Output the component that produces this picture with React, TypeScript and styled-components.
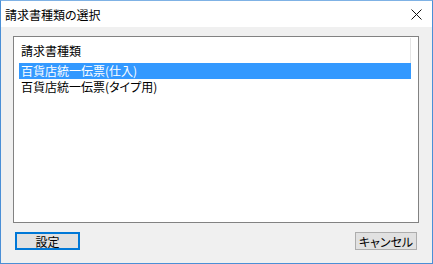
import styled, { createGlobalStyle } from "styled-components";

const GlobalStyle = createGlobalStyle`
  html, body {
    margin: 0;
    padding: 0;
    background: #ffffff;
  }
`;

const FONT = `"Noto Sans CJK JP", "Noto Sans", sans-serif`;

const rows = ["百貨店統一伝票(仕入)", "百貨店統一伝票(タイプ用)"];

export default function App() {
  return (
    <>
      <GlobalStyle />
      <Window>
        <TitleBar>
          <Title>請求書種類の選択</Title>
          <CloseButton>
            <svg width="11" height="11" viewBox="0 0 11 11">
              <path d="M0.5 0.5 L10.5 10.5 M10.5 0.5 L0.5 10.5" stroke="#111" strokeWidth="1" />
            </svg>
          </CloseButton>
        </TitleBar>
        <Client>
          <ListBox>
            <Column>
              <Header>請求書種類</Header>
              {rows.map((row, i) => (
                <Row key={row} selected={i === 0}>
                  {row}
                </Row>
              ))}
            </Column>
          </ListBox>
          <Buttons>
            <Button isDefault>設定</Button>
            <Button>キャンセル</Button>
          </Buttons>
        </Client>
      </Window>
    </>
  );
}

const Window = styled.div`
  width: 433px;
  height: 264px;
  box-sizing: border-box;
  border: 1px solid #4a8fd6;
  border-top-color: #7fb2e5;
  display: flex;
  flex-direction: column;
  font-family: ${FONT};
  font-feature-settings: "palt";
  background: #f0f0f0;
`;

const TitleBar = styled.div`
  height: 26px;
  flex-shrink: 0;
  background: #ffffff;
  display: flex;
  align-items: center;
  justify-content: space-between;
  padding: 0 10px 0 4px;
`;

const Title = styled.div`
  font-size: 12px;
  color: #000;
  line-height: 14px;
  padding-top: 1px;
`;

const CloseButton = styled.div`
  width: 11px;
  height: 11px;
  display: flex;
`;

const Client = styled.div`
  flex: 1;
  display: flex;
  flex-direction: column;
  padding: 9px 13px 13px 12px;
  gap: 9px;
`;

const ListBox = styled.div`
  height: 187px;
  box-sizing: border-box;
  border: 1px solid #828282;
  background: #ffffff;
  padding: 1px 6px 0 5px;
`;

const Column = styled.div`
  width: 392px;
  display: flex;
  flex-direction: column;
`;

const Header = styled.div`
  height: 25px;
  box-sizing: border-box;
  border-right: 1px solid #e5e5e5;
  font-size: 12px;
  line-height: 25px;
  padding-left: 2px;
  color: #000;
`;

const Row = styled.div<{ selected?: boolean }>`
  height: 16px;
  line-height: 16px;
  font-size: 12px;
  padding-left: 2px;
  white-space: nowrap;
  color: ${(p) => (p.selected ? "#ffffff" : "#000000")};
  background: ${(p) => (p.selected ? "#3399ff" : "transparent")};
`;

const Buttons = styled.div`
  display: flex;
  justify-content: space-between;
  padding: 0 2px 0 2px;
`;

const Button = styled.div<{ isDefault?: boolean }>`
  height: 18px;
  width: ${(p) => (p.isDefault ? "65px" : "62px")};
  box-sizing: border-box;
  background: #e1e1e1;
  border: ${(p) => (p.isDefault ? "2px solid #0078d7" : "1px solid #adadad")};
  font-size: 12px;
  color: #000;
  display: flex;
  align-items: center;
  justify-content: center;
`;
